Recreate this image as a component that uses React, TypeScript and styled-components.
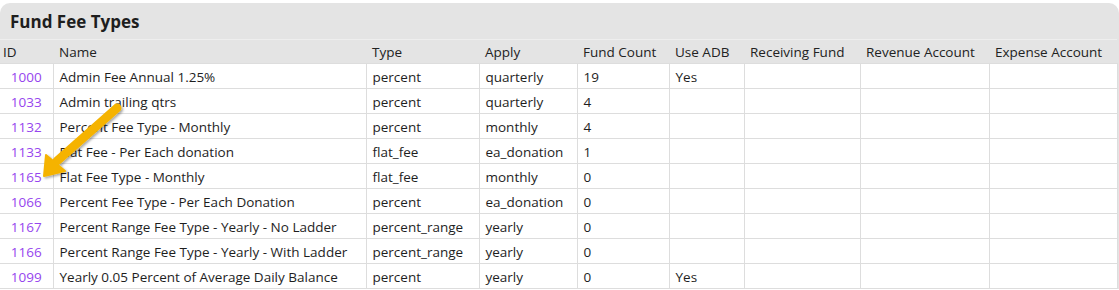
import React from "react";
import styled, { createGlobalStyle } from "styled-components";

const Global = createGlobalStyle`
  html, body { margin: 0; padding: 0; background: #ffffff; }
  body { font-family: "Open Sans", "Noto Sans", "Liberation Sans", sans-serif; color: #222; }
`;

const Page = styled.div`
  position: relative;
  width: 1119px;
  height: 290px;
  overflow: hidden;
  padding-top: 3px;
  box-sizing: border-box;
`;

const Panel = styled.section`
  background: #e4e4e4;
  border-radius: 10px 10px 0 0;
  padding-right: 2px;
  overflow: hidden;
`;

const Title = styled.h2`
  margin: 0;
  height: 36px;
  display: flex;
  align-items: center;
  padding-left: 10px;
  font-size: 17px;
  font-weight: 700;
  color: #1e1e1e;
`;

const Table = styled.table`
  width: 1117px;
  border-collapse: collapse;
  table-layout: fixed;
  font-size: 13.5px;
`;

const Th = styled.th<{ $pl?: number }>`
  height: 24px;
  padding: 1px 0 0 ${(p) => p.$pl ?? 6}px;
  box-sizing: border-box;
  text-align: left;
  font-weight: 400;
  color: #222;
  border-top: 1px solid #eeeeee;
  white-space: nowrap;
`;

const Td = styled.td<{ $center?: boolean }>`
  height: 25px;
  padding: 1px 0 0 ${(p) => (p.$center ? 0 : 6)}px;
  box-sizing: border-box;
  text-align: ${(p) => (p.$center ? "center" : "left")};
  background: #ffffff;
  border: 1px solid #dddddd;
  color: #1e1e1e;
  white-space: nowrap;
  &:first-child { border-left: none; }
`;

const IdLink = styled.a`
  color: #9645ee;
  text-decoration: none;
`;

const Overlay = styled.svg`
  position: absolute;
  left: 0;
  top: 0;
  pointer-events: none;
`;

const widths = [53, 313, 113, 98, 92, 75, 116, 129, 128];
const headers = [
  "ID",
  "Name",
  "Type",
  "Apply",
  "Fund Count",
  "Use ADB",
  "Receiving Fund",
  "Revenue Account",
  "Expense Account",
];

type Row = [string, string, string, string, string, string];
const rows: Row[] = [
  ["1000", "Admin Fee Annual 1.25%", "percent", "quarterly", "19", "Yes"],
  ["1033", "Admin trailing qtrs", "percent", "quarterly", "4", ""],
  ["1132", "Percent Fee Type - Monthly", "percent", "monthly", "4", ""],
  ["1133", "Flat Fee - Per Each donation", "flat_fee", "ea_donation", "1", ""],
  ["1165", "Flat Fee Type - Monthly", "flat_fee", "monthly", "0", ""],
  ["1066", "Percent Fee Type - Per Each Donation", "percent", "ea_donation", "0", ""],
  ["1167", "Percent Range Fee Type - Yearly - No Ladder", "percent_range", "yearly", "0", ""],
  ["1166", "Percent Range Fee Type - Yearly - With Ladder", "percent_range", "yearly", "0", ""],
  ["1099", "Yearly 0.05 Percent of Average Daily Balance", "percent", "yearly", "0", "Yes"],
];

export default function App() {
  return (
    <>
      <Global />
      <Page>
        <Panel>
          <Title>Fund Fee Types</Title>
          <Table>
            <colgroup>
              {widths.map((w, i) => (
                <col key={i} style={{ width: w }} />
              ))}
            </colgroup>
            <thead>
              <tr>
                {headers.map((h, i) => (
                  <Th key={h} $pl={i === 0 ? 3 : 6}>
                    {h}
                  </Th>
                ))}
              </tr>
            </thead>
            <tbody>
              {rows.map((r) => (
                <tr key={r[0]}>
                  <Td $center>
                    <IdLink href="#">{r[0]}</IdLink>
                  </Td>
                  <Td>{r[1]}</Td>
                  <Td>{r[2]}</Td>
                  <Td>{r[3]}</Td>
                  <Td>{r[4]}</Td>
                  <Td>{r[5]}</Td>
                  <Td />
                  <Td />
                  <Td />
                </tr>
              ))}
            </tbody>
          </Table>
        </Panel>
        <Overlay width="160" height="200" viewBox="0 0 160 200">
          <defs>
            <filter id="sh" x="-20%" y="-20%" width="140%" height="140%">
              <feDropShadow dx="1.5" dy="1.5" stdDeviation="1.2" floodColor="#000" floodOpacity="0.35" />
            </filter>
          </defs>
          <g filter="url(#sh)">
            <line x1="117" y1="108" x2="57" y2="161" stroke="#f5b300" strokeWidth="9" strokeLinecap="round" />
            <polygon points="44,176 46,155 65,171" fill="#f5b300" stroke="#f5b300" strokeWidth="2" strokeLinejoin="round" />
          </g>
        </Overlay>
      </Page>
    </>
  );
}
